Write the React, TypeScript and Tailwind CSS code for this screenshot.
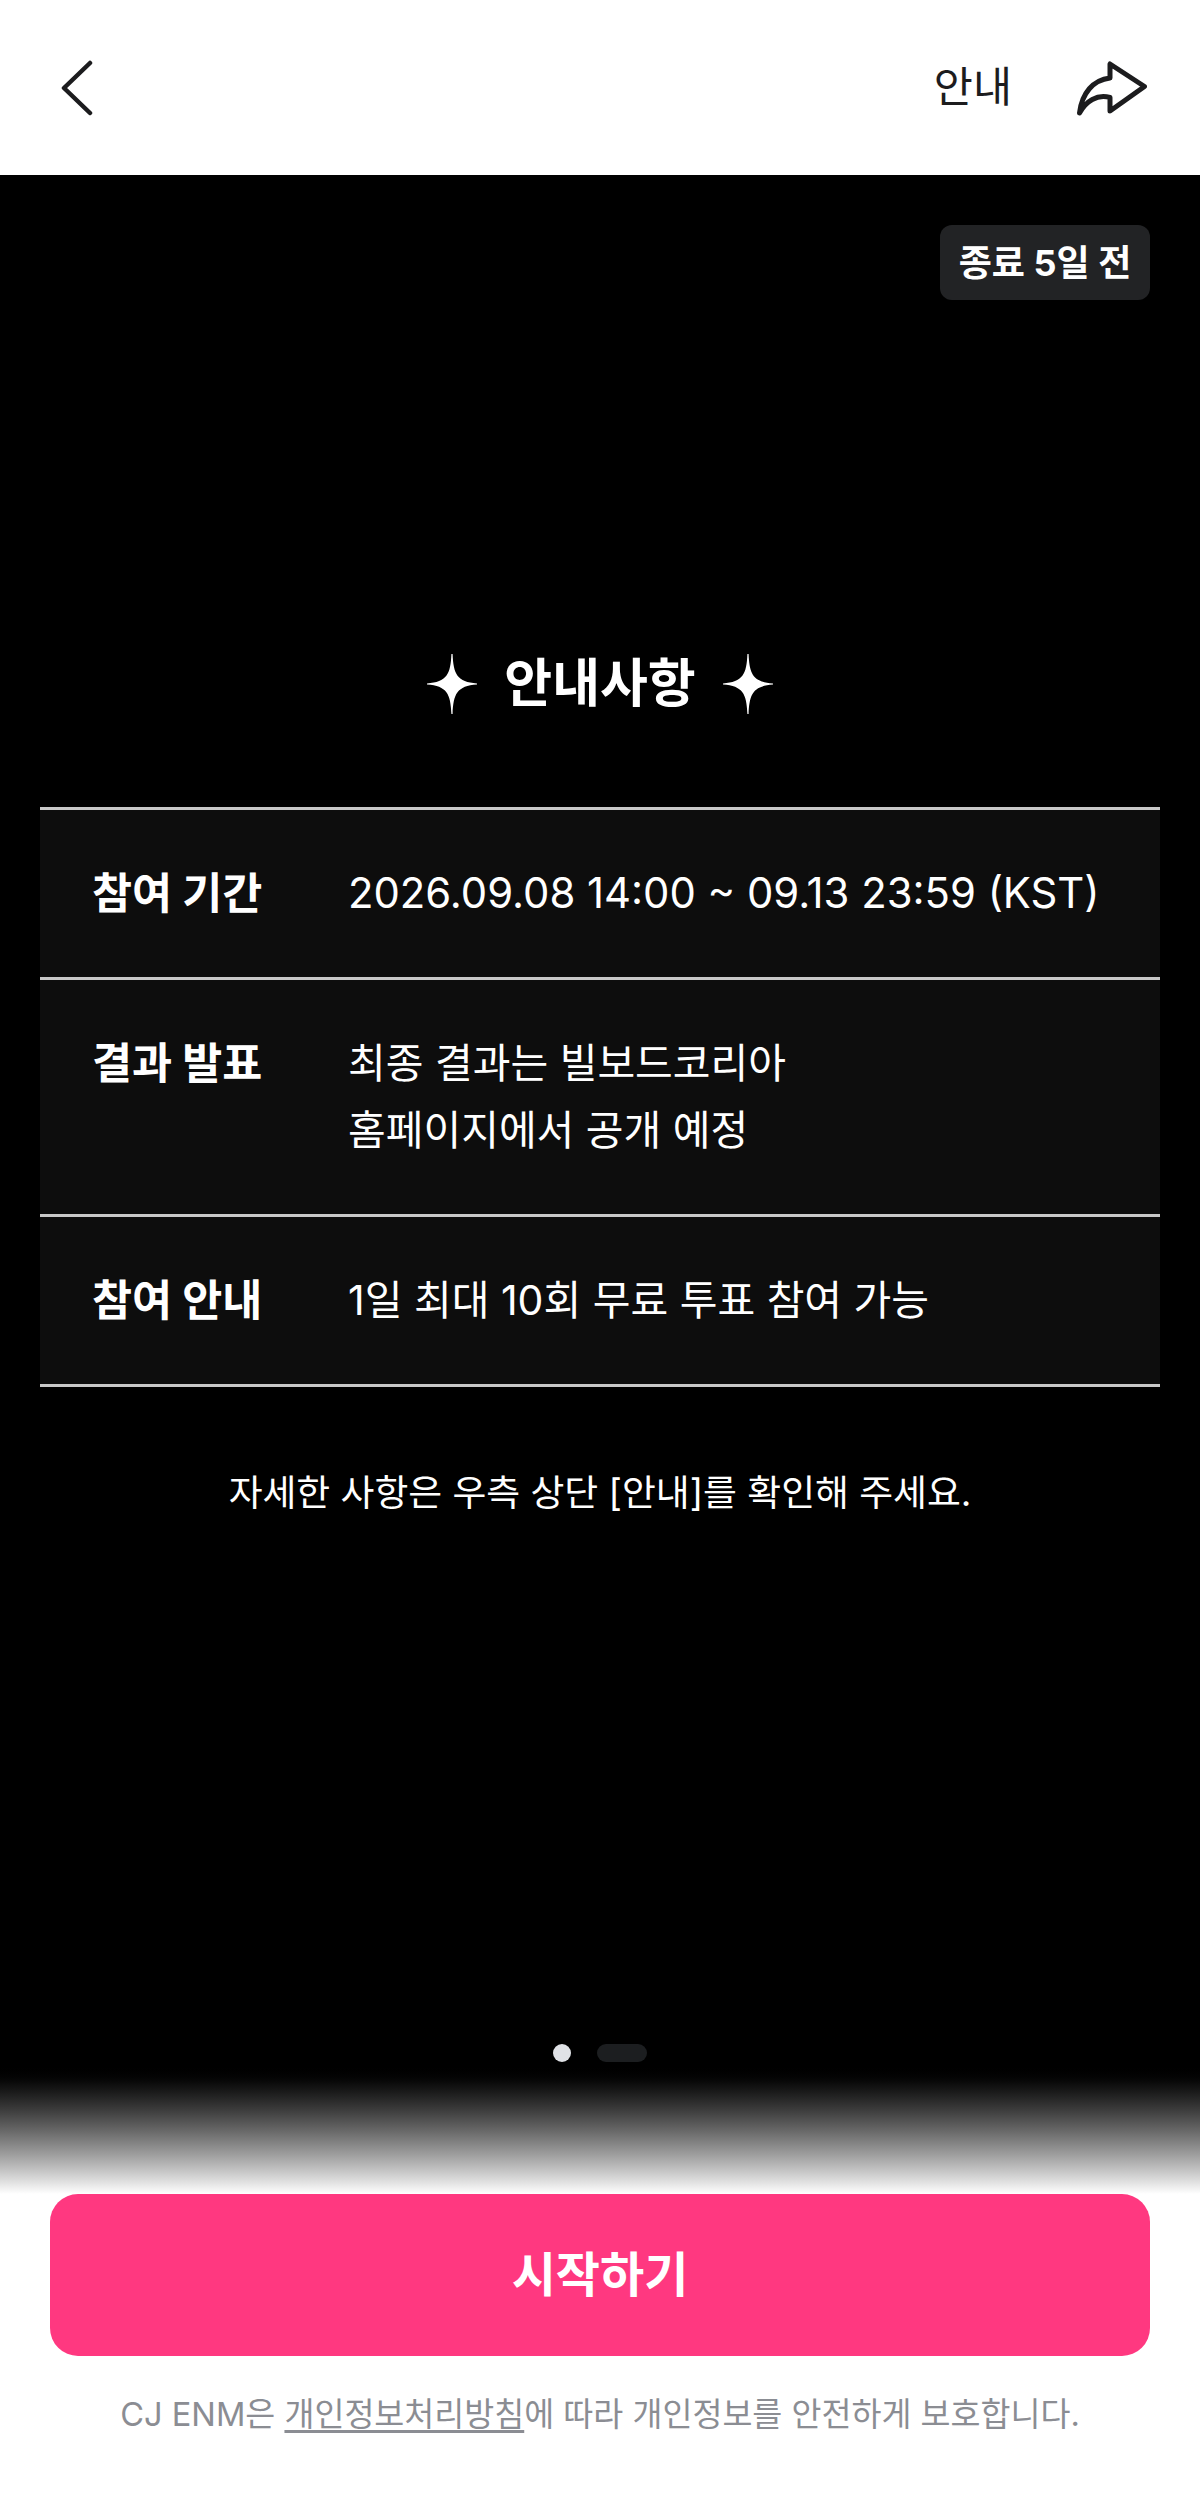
const rows = [
  { label: "참여 기간", size: "text-[41.8px]", lines: ["2026.09.08 14:00 ~ 09.13 23:59 (KST)"] },
  { label: "결과 발표", size: "text-[41px]", lines: ["최종 결과는 빌보드코리아", "홈페이지에서 공개 예정"] },
  { label: "참여 안내", size: "text-[41px]", lines: ["1일 최대 10회 무료 투표 참여 가능"] },
];

function Sparkle() {
  return (
    <svg width="50" height="60" viewBox="0 0 50 60" fill="white">
      <path d="M24.4 0H25.6C26.4 20 30 28 50 29.4V30.6C30 32 26.4 40 25.6 60H24.4C23.6 40 20 32 0 30.6V29.4C20 28 23.6 20 24.4 0Z" />
    </svg>
  );
}

export default function App() {
  return (
    <div className="flex h-[2494px] w-[1200px] flex-col bg-white font-['Inter','Noto_Sans_CJK_KR',sans-serif]">
      <header className="flex h-[175px] shrink-0 items-center justify-between pl-[60px] pr-[53px]">
        <svg width="34" height="56" viewBox="0 0 34 56" fill="none" stroke="#1c1c1e" strokeWidth="4.5" strokeLinecap="round" strokeLinejoin="round">
          <path d="M30 3L4 28L30 53" />
        </svg>
        <div className="flex items-center gap-[63px]">
          <span className="text-[42.5px] leading-none text-[#1c1c1e]">안내</span>
          <svg width="72" height="58" viewBox="0 0 72 58" fill="none" stroke="#1c1c1e" strokeWidth="5" strokeLinecap="round" strokeLinejoin="round">
            <path d="M69.5 27.5L35 5V19C18 21 7 34 4.5 54C11 42 22 35 35 38.5V52L69.5 27.5Z" />
          </svg>
        </div>
      </header>

      <main className="flex h-[1888px] shrink-0 flex-col bg-black text-white">
        <div className="flex justify-end pr-[50px] pt-[50px]">
          <span className="flex h-[75px] w-[210px] items-center justify-center rounded-xl bg-[#222325] text-[36px] font-bold">
            종료 5일 전
          </span>
        </div>

        <div className="mt-[354px] flex items-center justify-center gap-[27px]">
          <Sparkle />
          <h1 className="text-[52px] font-bold leading-[60px]">안내사항</h1>
          <Sparkle />
        </div>

        <div className="mx-[40px] mt-[93px] border-b-[3px] border-[#c8c8c8] bg-[#0d0d0d]">
          {rows.map((row) => (
            <div key={row.label} className="flex border-t-[3px] border-[#c8c8c8] py-[50px] pl-[52px]">
              <div className="w-[256px] text-[43.5px] font-bold leading-[67px]">{row.label}</div>
              <div className={`${row.size} leading-[67px]`}>
                {row.lines.map((line) => (
                  <div key={line}>{line}</div>
                ))}
              </div>
            </div>
          ))}
        </div>

        <p className="mt-[76px] text-center text-[36.8px] leading-[60px]">
          자세한 사항은 우측 상단 [안내]를 확인해 주세요.
        </p>

        <div className="mt-auto flex justify-center gap-[26px] pb-[1px] pr-[1px]">
          <span className="h-[18px] w-[18px] rounded-full bg-[#e0e2e6]" />
          <span className="h-[18px] w-[50px] rounded-full bg-[#1c1e20]" />
        </div>
      </main>

      <div className="h-[131px] shrink-0 bg-gradient-to-b from-black to-white" />

      <div className="px-[50px]">
        <button className="flex h-[162px] w-full items-center justify-center rounded-[28px] bg-[#ff3880] text-[48px] font-bold text-white">
          시작하기
        </button>
        <p className="mt-[36px] text-center text-[32.6px] leading-[44px] text-[#8b8d93]">
          CJ ENM은 <span className="underline underline-offset-4">개인정보처리방침</span>에 따라 개인정보를 안전하게 보호합니다.
        </p>
      </div>
    </div>
  );
}
